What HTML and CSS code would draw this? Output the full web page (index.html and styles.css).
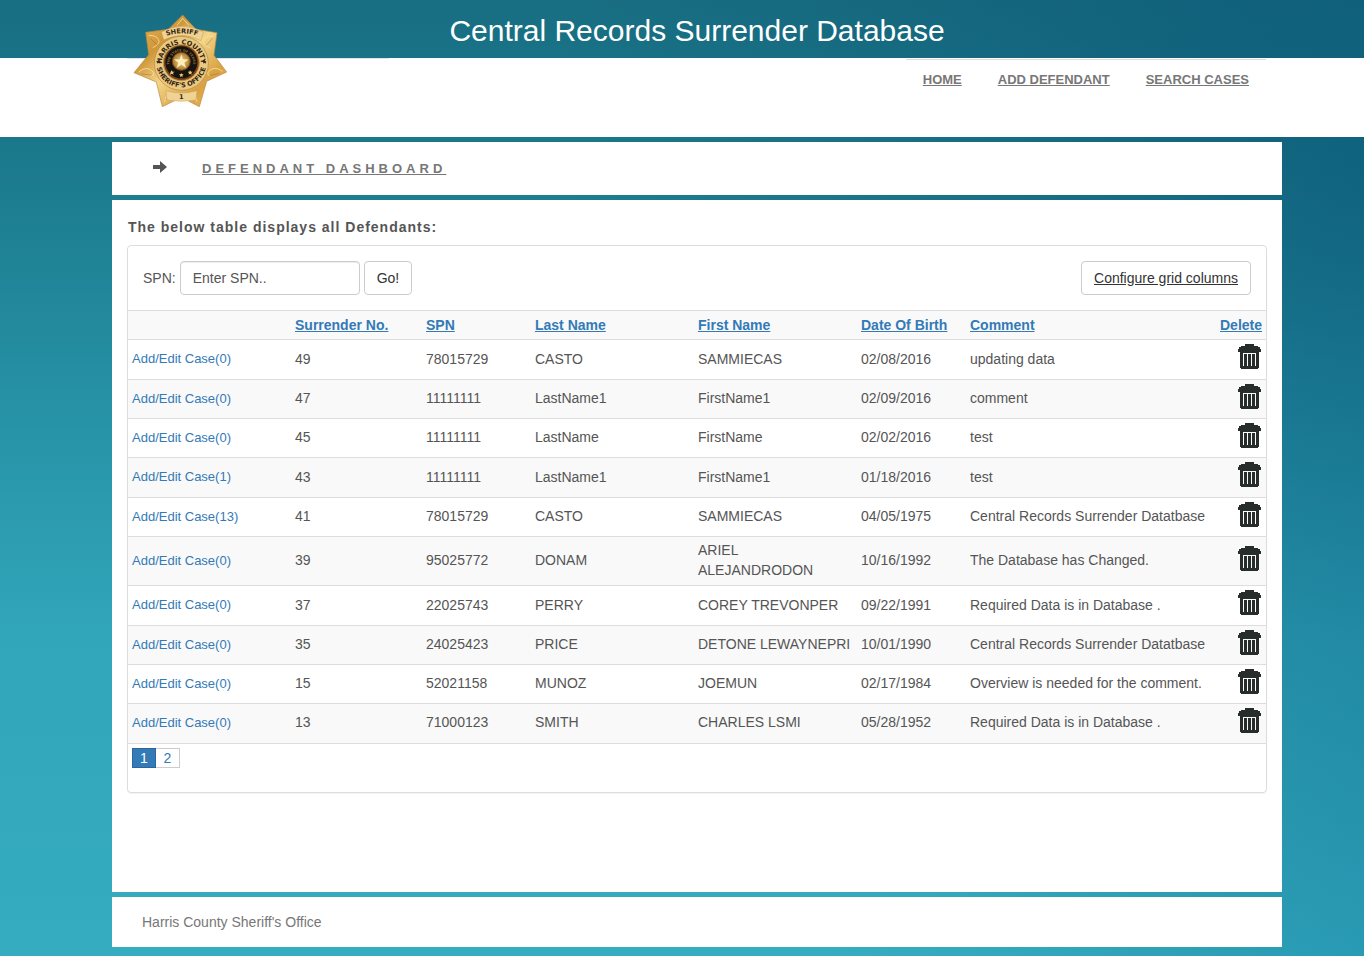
FILE: index.html
```html
<!DOCTYPE html>
<html lang="en">
<head>
<meta charset="utf-8">
<title>Central Records Surrender Database</title>
<link rel="stylesheet" href="styles.css">
</head>
<body>
<svg class="symbols" aria-hidden="true">
  <symbol id="trash" viewBox="0 0 23 25">
    <path fill="#272d2a" fill-rule="evenodd" d="M7 0h9v2h4v1h2v2h1v3h-2v16h-1v1H3v-1H2V8H0V5h1V3h2V2h4zM5 9v13h1V9zm1 0v1h12V9zm3 1v12h1V10zm4 0v12h1V10zm4 0v12h1V10z"/>
  </symbol>
</svg>
<header class="top">
  <div class="band"><h1>Central Records Surrender Database</h1></div>
  <div class="menu">
    <div class="brand">
      <svg class="badge" viewBox="36 36 294 294" role="img" aria-label="Sheriff, Harris County Sheriff's Office">
        <defs>
          <linearGradient id="gold" x1="0" y1="0" x2="1" y2="1">
            <stop offset="0" stop-color="#e8bd60"/><stop offset=".3" stop-color="#cf9639"/>
            <stop offset=".5" stop-color="#f3d58a"/><stop offset=".75" stop-color="#d9a243"/><stop offset="1" stop-color="#ecc164"/>
          </linearGradient>
          <radialGradient id="core"><stop offset="0" stop-color="#f6dd95"/><stop offset="1" stop-color="#a87428"/></radialGradient>
          <path id="arcMid" d="M128 210A59 59 0 1 1 240 210"/>
          <path id="arcLow" d="M111 170A75 75 0 1 0 257 170"/>
          <path id="arcCap" d="M118 116Q186 84 254 116"/>
          <path id="arcTexas" d="M149 199A36 36 0 1 1 219 199"/>
        </defs>
        <path d="M188 45L228 88 291 98 282 166 320 216 260 244 238 320 184 292 127 320 109 246 42 218 86 164 77 97 145 88z" fill="url(#gold)" stroke="#b9853a" stroke-width="2"/>
        <g fill="none" stroke="#f8e2a0" stroke-width="3" opacity=".8">
          <path d="M86 106q24 0 30 13t-18 24M281 108q-24 0-30 12t21 24M56 216q22-18 38-5t-1 18M307 214q-20-16-36-4t0 18M134 306q4-28 18-25M231 306q-5-28-18-25M171 76l17-21 19 21"/>
        </g>
        <g fill="none" stroke="#96611c" stroke-width="2" opacity=".6">
          <path d="M90 115l22 20M278 115l-20 22M64 222l31 3M298 220l-30 7M138 298l13-13M226 298l-12-13"/>
        </g>
        <path d="M124 96Q188 62 250 96L243 122Q188 92 131 120z" fill="#eed394" stroke="#b9853a" stroke-width="1"/>
        <circle cx="184" cy="190" r="81" fill="#e9ca83" stroke="#b9853a" stroke-width="2"/>
        <path d="M138 272Q184 286 231 272L228 300Q184 308 141 300z" fill="#eed394" stroke="#c08d3b" stroke-width="1"/>
        <circle cx="184" cy="188" r="54" fill="#7b431d" stroke="#c59640" stroke-width="3"/>
        <circle cx="184" cy="187" r="48" fill="#17130e"/>
        <circle cx="184" cy="184" r="27" fill="url(#core)" stroke="#6e4719" stroke-width="3"/>
        <path d="M184 161l6 16 17 1-13 10 5 17-15-10-15 10 5-17-13-10 17-1z" fill="#fff0bb" stroke="#b68234"/>
        <path d="M154 211l4 4 6 0-5 4 2 5-6-3-5 3 1-6zM184 219l2 4 5 0-4 4 1 5-4-3-4 3 1-5-4-4 5 0zM210 211l3 4 5 0-4 4 1 5-5-3-4 3 1-5-4-4 5 0z" fill="#ecc870"/>
        <g class="badge-text">
          <text font-size="20"><textPath href="#arcCap" startOffset="50%">SHERIFF</textPath></text>
          <text font-size="20"><textPath href="#arcMid" startOffset="50%">HARRIS COUNTY</textPath></text>
          <text font-size="20"><textPath href="#arcLow" startOffset="50%">SHERIFF'S OFFICE</textPath></text>
          <text class="texas"><textPath href="#arcTexas" startOffset="50%">THE STATE OF TEXAS</textPath></text>
          <text x="184" y="296" font-size="20">1</text>
        </g>
        <path d="M115 178l2 5 5 0-4 3 1 5-4-3-4 3 1-5-4-3 5 0zM253 178l2 5 5 0-4 3 1 5-4-3-4 3 1-5-4-3 5 0z" fill="#38240f"/>
      </svg>
    </div>
    <nav>
      <a href="#">HOME</a><a href="#">ADD DEFENDANT</a><a href="#">SEARCH CASES</a>
    </nav>
  </div>
</header>
<div class="page">
  <section class="crumb">
    <svg class="arrow" viewBox="0 0 14 12" aria-hidden="true"><path d="M0 4h7V0l7 6-7 6V8H0z" fill="#555"/></svg>
    <a href="#">DEFENDANT DASHBOARD</a>
  </section>
  <main>
    <h2>The below table displays all Defendants:</h2>
    <div class="panel">
      <form class="tools">
        <label for="spn">SPN:</label>
        <input id="spn" type="text" placeholder="Enter SPN..">
        <button type="button">Go!</button>
        <a class="configure" href="#">Configure grid columns</a>
      </form>
      <table>
        <colgroup><col class="c-case"><col class="c-no"><col class="c-spn"><col class="c-name"><col class="c-name"><col class="c-dob"><col><col class="c-del"></colgroup>
        <thead><tr><th></th><th><a href="#">Surrender No.</a></th><th><a href="#">SPN</a></th><th><a href="#">Last Name</a></th><th><a href="#">First Name</a></th><th><a href="#">Date Of Birth</a></th><th><a href="#">Comment</a></th><th><a href="#">Delete</a></th></tr></thead>
        <tbody>
          <tr><td><a href="#">Add/Edit Case(0)</a></td><td>49</td><td>78015729</td><td>CASTO</td><td>SAMMIECAS</td><td>02/08/2016</td><td>updating data</td><td><button type="button" aria-label="Delete"><svg><use href="#trash"/></svg></button></td></tr>
          <tr><td><a href="#">Add/Edit Case(0)</a></td><td>47</td><td>11111111</td><td>LastName1</td><td>FirstName1</td><td>02/09/2016</td><td>comment</td><td><button type="button" aria-label="Delete"><svg><use href="#trash"/></svg></button></td></tr>
          <tr><td><a href="#">Add/Edit Case(0)</a></td><td>45</td><td>11111111</td><td>LastName</td><td>FirstName</td><td>02/02/2016</td><td>test</td><td><button type="button" aria-label="Delete"><svg><use href="#trash"/></svg></button></td></tr>
          <tr><td><a href="#">Add/Edit Case(1)</a></td><td>43</td><td>11111111</td><td>LastName1</td><td>FirstName1</td><td>01/18/2016</td><td>test</td><td><button type="button" aria-label="Delete"><svg><use href="#trash"/></svg></button></td></tr>
          <tr><td><a href="#">Add/Edit Case(13)</a></td><td>41</td><td>78015729</td><td>CASTO</td><td>SAMMIECAS</td><td>04/05/1975</td><td>Central Records Surrender Datatbase</td><td><button type="button" aria-label="Delete"><svg><use href="#trash"/></svg></button></td></tr>
          <tr><td><a href="#">Add/Edit Case(0)</a></td><td>39</td><td>95025772</td><td>DONAM</td><td>ARIEL ALEJANDRODON</td><td>10/16/1992</td><td>The Database has Changed.</td><td><button type="button" aria-label="Delete"><svg><use href="#trash"/></svg></button></td></tr>
          <tr><td><a href="#">Add/Edit Case(0)</a></td><td>37</td><td>22025743</td><td>PERRY</td><td>COREY TREVONPER</td><td>09/22/1991</td><td>Required Data is in Database .</td><td><button type="button" aria-label="Delete"><svg><use href="#trash"/></svg></button></td></tr>
          <tr><td><a href="#">Add/Edit Case(0)</a></td><td>35</td><td>24025423</td><td>PRICE</td><td>DETONE LEWAYNEPRI</td><td>10/01/1990</td><td>Central Records Surrender Datatbase</td><td><button type="button" aria-label="Delete"><svg><use href="#trash"/></svg></button></td></tr>
          <tr><td><a href="#">Add/Edit Case(0)</a></td><td>15</td><td>52021158</td><td>MUNOZ</td><td>JOEMUN</td><td>02/17/1984</td><td>Overview is needed for the comment.</td><td><button type="button" aria-label="Delete"><svg><use href="#trash"/></svg></button></td></tr>
          <tr><td><a href="#">Add/Edit Case(0)</a></td><td>13</td><td>71000123</td><td>SMITH</td><td>CHARLES LSMI</td><td>05/28/1952</td><td>Required Data is in Database .</td><td><button type="button" aria-label="Delete"><svg><use href="#trash"/></svg></button></td></tr>
        </tbody>
      </table>
      <div class="pager"><a class="current" href="#">1</a><a href="#">2</a></div>
    </div>
  </main>
  <footer>Harris County Sheriff's Office</footer>
</div>
</body>
</html>
```
FILE: styles.css
```css
* { box-sizing: border-box; }
html { min-height: 100%; }
body {
  margin: 0;
  min-height: 100vh;
  font: 14px/20px "Liberation Sans", Arial, sans-serif;
  color: #555;
  background:
    radial-gradient(ellipse 60% 85% at 100% 20%, rgba(5, 60, 95, .32), rgba(5, 60, 95, 0)),
    linear-gradient(to right, rgba(0, 100, 140, 0) 60%, rgba(0, 100, 140, .22) 100%),
    linear-gradient(#186e82 0%, #1b798c 16%, #2a98ac 50%, #31a5ba 66%, #36acc1 100%);
}
a { color: #337ab7; }
h1, h2 { margin: 0; }
.symbols { display: none; }

.band { padding: 13px 82px 0 112px; height: 58px; text-align: center; }
h1 { font-size: 30px; line-height: 36px; font-weight: 400; color: #fff; }
.menu {
  display: flex;
  justify-content: space-between;
  height: 79px;
  padding: 0 98px 0 127px;
  background: #fff;
}
.brand { width: 262px; height: 1px; background: #e3e3e3; }
.badge { display: block; position: relative; top: -46px; left: 5px; width: 98px; height: 98px; }
.badge-text { font-family: "DejaVu Sans", sans-serif; font-weight: 700; text-anchor: middle; fill: #38240f; }
.badge-text .texas { font-size: 10px; fill: #8a6b35; }
nav { display: flex; gap: 36px; margin-top: 1px; padding: 10px 17px; border-top: 1px solid #ddd; }
nav a { font-size: 13px; font-weight: 700; color: #777; }

.page { margin: 5px 82px 8px 112px; }
.crumb, main, footer { background: #fff; margin-bottom: 5px; }
.crumb { display: flex; align-items: flex-start; gap: 35px; height: 53px; padding: 17px 41px; }
.crumb a { font-size: 13px; font-weight: 700; letter-spacing: 4px; color: #777; }
.arrow { width: 14px; height: 12px; margin-top: 2px; }
main { padding: 17px 15px 99px; }
h2 { padding-left: 1px; font-size: 14px; line-height: 20px; letter-spacing: 1px; margin-bottom: 8px; }
.panel { border: 1px solid #ddd; border-radius: 4px; box-shadow: 0 1px 1px rgba(0, 0, 0, .05); }
.tools { display: flex; align-items: center; gap: 4px; padding: 15px; }
.tools input, .tools button, .configure {
  height: 34px;
  padding: 6px 12px;
  border: 1px solid #ccc;
  border-radius: 4px;
  background: #fff;
  font: inherit;
  color: #333;
}
.tools input { width: 180px; color: #555; box-shadow: inset 0 1px 1px rgba(0, 0, 0, .075); }
.tools input::placeholder { color: #555; opacity: 1; }
.configure { margin-left: auto; }

table { width: 100%; table-layout: fixed; border-collapse: collapse; }
.c-case { width: 163px; }
.c-no { width: 131px; }
.c-spn { width: 109px; }
.c-name { width: 163px; }
.c-dob { width: 109px; }
.c-del { width: 50px; }
th, td { padding: 4px; text-align: left; border-top: 1px solid #ddd; }
thead tr, tbody tr:nth-child(even) { background: #f9f9f9; }
thead tr { height: 29px; }
tbody tr { height: 39px; }
tbody tr:nth-child(3n+1) { height: 40px; }
tbody tr:last-child { height: 39px; }
tbody td { padding-top: 3px; padding-bottom: 5px; }
td:first-child a { font-size: 13px; text-decoration: none; }
th:last-child, td:last-child { text-align: right; }
td:last-child { padding-right: 5px; }
td button { display: inline-block; vertical-align: middle; margin-bottom: 4px; padding: 0; border: 0; background: none; cursor: pointer; }
td svg { display: block; width: 23px; height: 25px; shape-rendering: crispEdges; }
.pager { display: flex; padding: 4px 4px 24px; border-top: 1px solid #ddd; }
.pager a { width: 24px; height: 20px; border: 1px solid #ccc; border-left: 0; line-height: 18px; text-align: center; text-decoration: none; }
.pager .current { background: #337ab7; border: 1px solid #2b669a; color: #fff; }
footer { margin: 0; padding: 15px 30px; color: #777; }
```
